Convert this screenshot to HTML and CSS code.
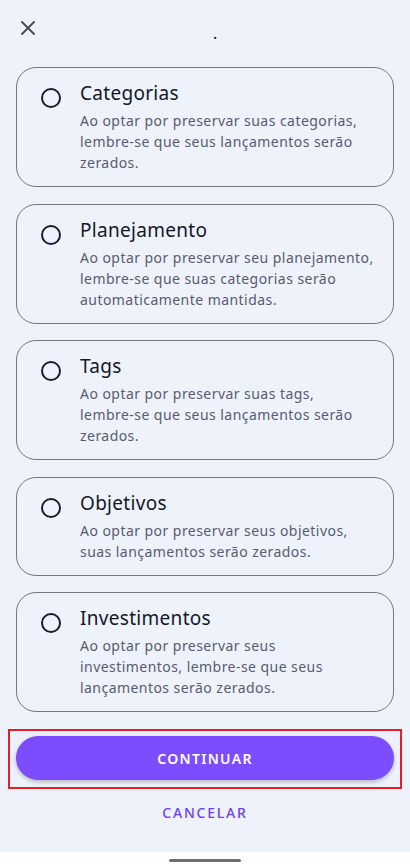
FILE: index.html
```html
<!DOCTYPE html>
<html lang="pt-BR">
<head>
  <meta charset="UTF-8" />
  <title>Preservar dados</title>
  <link rel="stylesheet" href="styles.css">
</head>
<body>
  <div class="screen">
    <!-- Top bar -->
    <header class="topbar">
      <button class="close-btn" aria-label="Fechar">
        <svg width="14" height="14" viewBox="0 0 14 14"><path d="M1 1L13 13M13 1L1 13" stroke="#44474f" stroke-width="1.8" stroke-linecap="round"/></svg>
      </button>
      <span class="dot">.</span>
    </header>

    <!-- Options -->
    <main class="options">
      <label class="card">
        <span class="radio"></span>
        <span class="card-text">
          <span class="card-title">Categorias</span>
          <span class="card-desc">Ao optar por preservar suas categorias, lembre-&#8288;se que seus lançamentos serão zerados.</span>
        </span>
      </label>
      <label class="card">
        <span class="radio"></span>
        <span class="card-text">
          <span class="card-title">Planejamento</span>
          <span class="card-desc">Ao optar por preservar seu planejamento, lembre-&#8288;se que suas categorias serão automaticamente mantidas.</span>
        </span>
      </label>
      <label class="card">
        <span class="radio"></span>
        <span class="card-text">
          <span class="card-title">Tags</span>
          <span class="card-desc">Ao optar por preservar suas tags, lembre-&#8288;se que seus lançamentos serão zerados.</span>
        </span>
      </label>
      <label class="card">
        <span class="radio"></span>
        <span class="card-text">
          <span class="card-title">Objetivos</span>
          <span class="card-desc">Ao optar por preservar seus objetivos, suas lançamentos serão zerados.</span>
        </span>
      </label>
      <label class="card">
        <span class="radio"></span>
        <span class="card-text">
          <span class="card-title">Investimentos</span>
          <span class="card-desc">Ao optar por preservar seus investimentos, lembre-&#8288;se que seus lançamentos serão zerados.</span>
        </span>
      </label>
    </main>

    <!-- Actions -->
    <div class="actions">
      <div class="highlight-box">
        <button class="btn-primary">CONTINUAR</button>
      </div>
      <button class="btn-text">CANCELAR</button>
    </div>
  </div>

  <div class="navbar"><span class="handle"></span></div>
</body>
</html>
```

FILE: styles.css
```css
body {
  margin: 0;
  font-family: "Noto Sans", sans-serif;
  background-color: #ffffff;
}

.screen {
  height: 852px;
  background-color: #edf2fb;
  display: flex;
  flex-direction: column;
}

.topbar {
  height: 67px;
  flex: none;
  position: relative;
}

.close-btn {
  border: none;
  background: none;
  padding: 0;
  position: absolute;
  left: 21px;
  top: 21px;
  width: 14px;
  height: 14px;
  display: flex;
}

.dot {
  position: absolute;
  left: 213px;
  top: 22px;
  font-size: 16px;
  color: #1a1b20;
}

.options {
  display: flex;
  flex-direction: column;
  gap: 16.6px;
  padding: 0 16px;
}

.card {
  border: 1px solid #74777f;
  border-radius: 20px;
  display: flex;
  padding: 11px 14px 13px 24px;
}

.radio {
  flex: none;
  width: 16px;
  height: 16px;
  border: 2px solid #1a1b2e;
  border-radius: 50%;
  margin-top: 9px;
  margin-right: 19px;
}

.card-text {
  display: flex;
  flex-direction: column;
}

.card-title {
  font-size: 19px;
  line-height: 28px;
  letter-spacing: 0.3px;
  color: #15172a;
  margin-bottom: 3px;
}

.card-desc {
  font-size: 14px;
  line-height: 21px;
  letter-spacing: 0.45px;
  color: #595b70;
}

.actions {
  display: flex;
  flex-direction: column;
  align-items: center;
  margin-top: 17px;
}

.highlight-box {
  border: 2px solid #ea1c24;
  width: 394px;
  padding: 5px 6px 7px;
  box-sizing: border-box;
}

.btn-primary {
  width: 100%;
  height: 44px;
  border: none;
  border-radius: 22px;
  background-color: #7c4dff;
  color: #ffffff;
  font-family: "Noto Sans", sans-serif;
  font-size: 14px;
  font-weight: 600;
  letter-spacing: 1.3px;
  box-shadow: 0 2px 4px rgba(0, 0, 0, 0.25);
}

.btn-text {
  margin-top: 8px;
  border: none;
  background: none;
  color: #6f3ff0;
  font-family: "Noto Sans", sans-serif;
  font-size: 14px;
  font-weight: 500;
  letter-spacing: 1.8px;
  padding: 6px 10px;
}

.navbar {
  height: 16px;
  display: flex;
  justify-content: center;
  align-items: center;
}

.handle {
  width: 72px;
  height: 3px;
  border-radius: 2px;
  background-color: #6e6e6e;
}
```
